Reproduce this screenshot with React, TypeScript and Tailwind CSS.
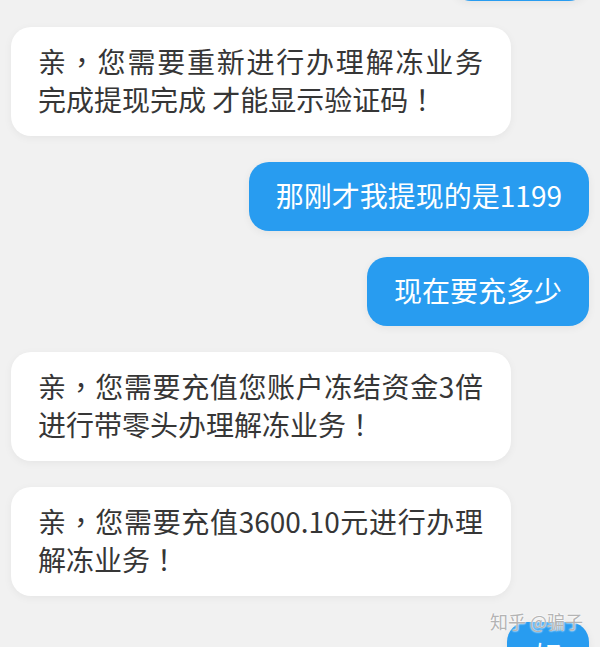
import React from 'react';

const font = { fontFamily: '"Noto Sans CJK SC", "Noto Sans", sans-serif' };

// full-width punctuation sits centred in the cell on the phone, TC glyphs do that
const withPunct = (s: string) =>
  s.split(/([，！])/).map((part, i) =>
    part === '，' || part === '！' ? (
      <span key={i} style={{ fontFamily: '"Noto Sans CJK TC", sans-serif' }}>
        {part}
      </span>
    ) : (
      part
    )
  );

// incoming message: fixed width, first lines stretched to the edge like the phone does
const Left: React.FC<{ lines: string[] }> = ({ lines }) => (
  <div className="self-start w-[500px] rounded-[20px] bg-white pl-[27px] pr-[28px] pt-[15px] pb-[18px] text-[28px] leading-[38px] text-[#363636] shadow-[0_2px_8px_rgba(0,0,0,0.05)]">
    {lines.map((l, i) => (
      <div
        key={i}
        className={i < lines.length - 1 ? 'whitespace-pre text-justify [text-align-last:justify]' : 'whitespace-pre'}
      >
        {withPunct(l)}
      </div>
    ))}
  </div>
);

const Right: React.FC<{ text: string; className?: string }> = ({ text, className = '' }) => (
  <div
    className={`self-end rounded-[20px] bg-[#289cf0] px-[27px] pt-[14px] pb-[16px] text-[28px] leading-[39px] text-white whitespace-nowrap shadow-[0_2px_8px_rgba(0,0,0,0.06)] ${className}`}
  >
    {text}
  </div>
);

export default function App() {
  return (
    <div className="relative h-[647px] w-[600px] overflow-hidden bg-[#f1f1f1]" style={font}>
      <div className="flex flex-col gap-[26px] px-[11px]">
        <Right text="好的呢" className="-mt-[68px]" />
        <Left lines={['亲，您需要重新进行办理解冻业务', '完成提现完成 才能显示验证码！']} />
        <Right text="那刚才我提现的是1199" />
        <Right text="现在要充多少" />
        <Left lines={['亲，您需要充值您账户冻结资金3倍', '进行带零头办理解冻业务！']} />
        <Left lines={['亲，您需要充值3600.10元进行办理', '解冻业务！']} />
        <Right text="好" />
      </div>
      <div className="absolute left-[490px] top-[609px] text-[18px] leading-[24px] text-[#b4b4b4] [text-shadow:0_0_2px_#fff,0_0_2px_#fff]">
        知乎 @骗子
      </div>
    </div>
  );
}
